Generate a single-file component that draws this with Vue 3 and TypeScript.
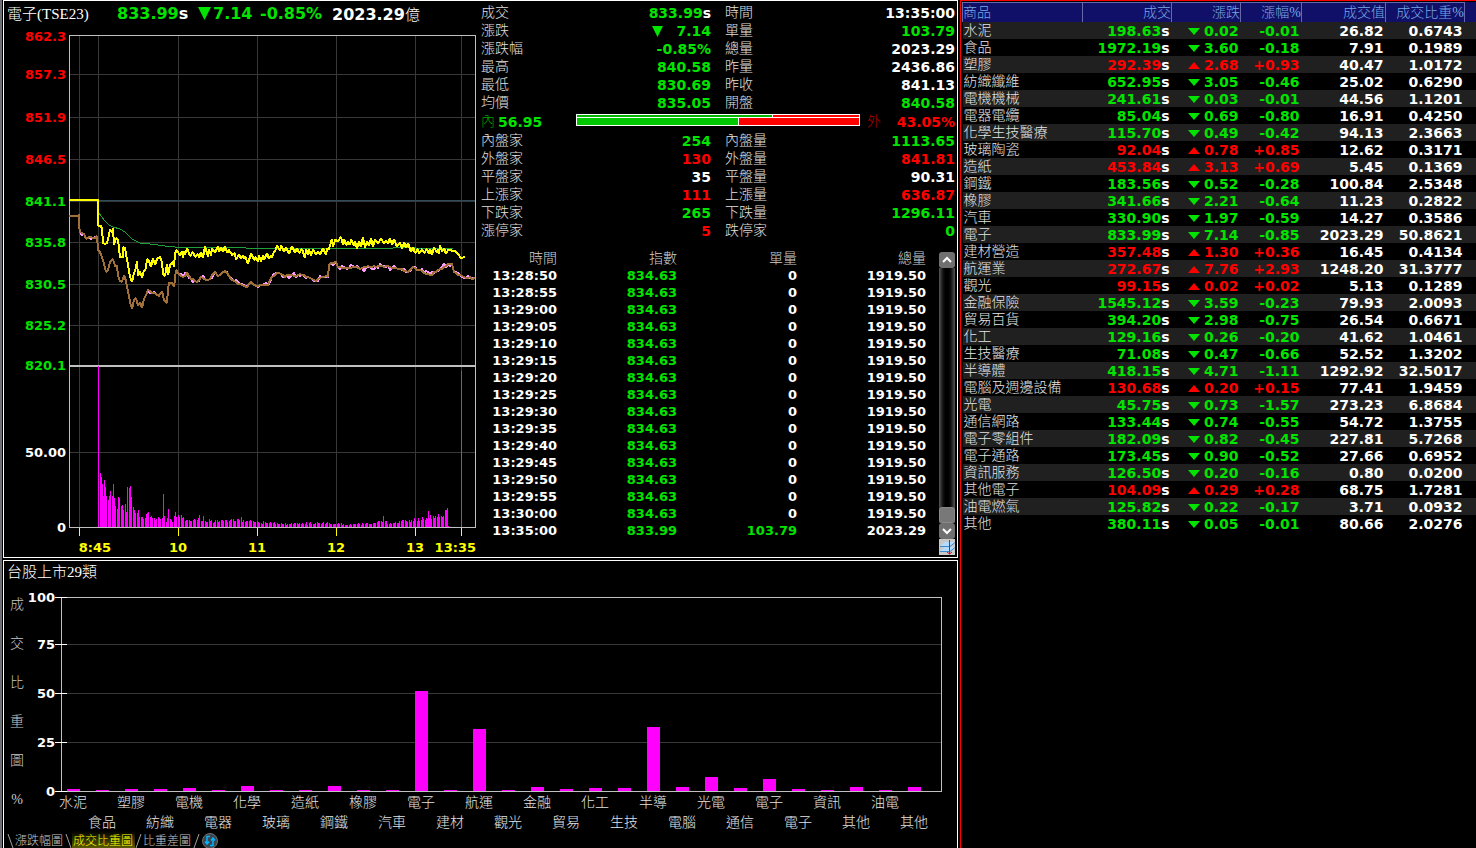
<script setup lang="ts">
import { ref } from 'vue'

type Tone = 'up' | 'down' | 'flat'

interface Quote {
  label: string
  value: string
  tone: Tone
  suffix?: string
  arrow?: boolean
}

interface Sector {
  name: string
  short: string
  price: string
  change: string
  percent: string
  amount: string
  weight: string
}

const quotesTop: Quote[] = [
  { label: '成交', value: '833.99', tone: 'down', suffix: 's' },
  { label: '時間', value: '13:35:00', tone: 'flat' },
  { label: '漲跌', value: '7.14', tone: 'down', arrow: true },
  { label: '單量', value: '103.79', tone: 'down' },
  { label: '漲跌幅', value: '-0.85%', tone: 'down' },
  { label: '總量', value: '2023.29', tone: 'flat' },
  { label: '最高', value: '840.58', tone: 'down' },
  { label: '昨量', value: '2436.86', tone: 'flat' },
  { label: '最低', value: '830.69', tone: 'down' },
  { label: '昨收', value: '841.13', tone: 'flat' },
  { label: '均價', value: '835.05', tone: 'down' },
  { label: '開盤', value: '840.58', tone: 'down' },
]

const quotesBottom: Quote[] = [
  { label: '內盤家', value: '254', tone: 'down' },
  { label: '內盤量', value: '1113.65', tone: 'down' },
  { label: '外盤家', value: '130', tone: 'up' },
  { label: '外盤量', value: '841.81', tone: 'up' },
  { label: '平盤家', value: '35', tone: 'flat' },
  { label: '平盤量', value: '90.31', tone: 'flat' },
  { label: '上漲家', value: '111', tone: 'up' },
  { label: '上漲量', value: '636.87', tone: 'up' },
  { label: '下跌家', value: '265', tone: 'down' },
  { label: '下跌量', value: '1296.11', tone: 'down' },
  { label: '漲停家', value: '5', tone: 'up' },
  { label: '跌停家', value: '0', tone: 'down' },
]

const tickTimes = [
  '13:28:50', '13:28:55', '13:29:00', '13:29:05', '13:29:10', '13:29:15', '13:29:20', '13:29:25',
  '13:29:30', '13:29:35', '13:29:40', '13:29:45', '13:29:50', '13:29:55', '13:30:00',
]
const ticks = [
  ...tickTimes.map((time) => ({ time, index: '834.63', single: '0', total: '1919.50' })),
  { time: '13:35:00', index: '833.99', single: '103.79', total: '2023.29' },
]

const sectorRows = `水泥|水泥|198.63|0.02|-0.01|26.82|0.6743
食品|食品|1972.19|3.60|-0.18|7.91|0.1989
塑膠|塑膠|292.39|2.68|+0.93|40.47|1.0172
紡織纖維|紡織|652.95|3.05|-0.46|25.02|0.6290
電機機械|電機|241.61|0.03|-0.01|44.56|1.1201
電器電纜|電器|85.04|0.69|-0.80|16.91|0.4250
化學生技醫療|化學|115.70|0.49|-0.42|94.13|2.3663
玻璃陶瓷|玻璃|92.04|0.78|+0.85|12.62|0.3171
造紙|造紙|453.84|3.13|+0.69|5.45|0.1369
鋼鐵|鋼鐵|183.56|0.52|-0.28|100.84|2.5348
橡膠|橡膠|341.66|2.21|-0.64|11.23|0.2822
汽車|汽車|330.90|1.97|-0.59|14.27|0.3586
電子|電子|833.99|7.14|-0.85|2023.29|50.8621
建材營造|建材|357.48|1.30|+0.36|16.45|0.4134
航運業|航運|272.67|7.76|+2.93|1248.20|31.3777
觀光|觀光|99.15|0.02|+0.02|5.13|0.1289
金融保險|金融|1545.12|3.59|-0.23|79.93|2.0093
貿易百貨|貿易|394.20|2.98|-0.75|26.54|0.6671
化工|化工|129.16|0.26|-0.20|41.62|1.0461
生技醫療|生技|71.08|0.47|-0.66|52.52|1.3202
半導體|半導|418.15|4.71|-1.11|1292.92|32.5017
電腦及週邊設備|電腦|130.68|0.20|+0.15|77.41|1.9459
光電|光電|45.75|0.73|-1.57|273.23|6.8684
通信網路|通信|133.44|0.74|-0.55|54.72|1.3755
電子零組件|電子|182.09|0.82|-0.45|227.81|5.7268
電子通路|電子|173.45|0.90|-0.52|27.66|0.6952
資訊服務|資訊|126.50|0.20|-0.16|0.80|0.0200
其他電子|其他|104.09|0.29|+0.28|68.75|1.7281
油電燃氣|油電|125.82|0.22|-0.17|3.71|0.0932
其他|其他|380.11|0.05|-0.01|80.66|2.0276`

const sectors: Sector[] = sectorRows.split('\n').map((line) => {
  const [name, short, price, change, percent, amount, weight] = line.split('|')
  return { name, short, price, change, percent, amount, weight }
})

const isUp = (s: Sector) => s.percent.startsWith('+')

/* Intraday chart geometry, in plot units */
const priceLevels = [
  { y: 36, text: '862.3', tone: 'up' },
  { y: 74, text: '857.3', tone: 'up' },
  { y: 117, text: '851.9', tone: 'up' },
  { y: 159, text: '846.5', tone: 'up' },
  { y: 201, text: '841.1', tone: 'down' },
  { y: 242, text: '835.8', tone: 'down' },
  { y: 284, text: '830.5', tone: 'down' },
  { y: 325, text: '825.2', tone: 'down' },
  { y: 365, text: '820.1', tone: 'down' },
  { y: 452, text: '50.00', tone: 'flat' },
  { y: 527, text: '0', tone: 'flat' },
]
const gridRows = [74, 117, 159, 201, 242, 284, 325, 452]
const gridCols = [79, 98, 178, 257, 336, 415, 461]
const timeMarks = [
  { x: 79, labelX: 95, text: '8:45', anchor: 'middle' },
  { x: 178, labelX: 178, text: '10', anchor: 'middle' },
  { x: 257, labelX: 257, text: '11', anchor: 'middle' },
  { x: 336, labelX: 336, text: '12', anchor: 'middle' },
  { x: 415, labelX: 415, text: '13', anchor: 'middle' },
  { x: 461, labelX: 476, text: '13:35', anchor: 'end' },
] as const

function makeRandom(seed: number) {
  let state = seed
  return () => {
    state = (state * 1103515245 + 12345) % 2147483648
    return state / 2147483648
  }
}

type Point = [number, number]
const toPoints = (list: Point[]) => list.map((p) => p.join(',')).join(' ')

function interpolate(list: Point[], x: number) {
  for (let i = 1; i < list.length; i++) {
    const [x0, y0] = list[i - 1]
    const [x1, y1] = list[i]
    if (x <= x1) return x1 === x0 ? y1 : y0 + ((y1 - y0) * (x - x0)) / (x1 - x0)
  }
  return list[list.length - 1][1]
}

const openingRun: Point[] = [
  [69, 200], [98, 200], [98, 226], [101, 226], [102, 229], [103, 243], [105, 244], [107, 243], [109, 235],
  [110, 229], [112, 233], [113, 228], [114, 245], [116, 238], [118, 240], [120, 257], [123, 257], [123, 247],
  [125, 248], [128, 265], [130, 277], [132, 282], [134, 273], [136, 268], [137, 261], [138, 276], [140, 271],
  [142, 278], [143, 273], [146, 268], [147, 259], [149, 261], [151, 267], [153, 258], [155, 265], [157, 259],
  [160, 257], [162, 262], [163, 274], [165, 276], [167, 264], [168, 275], [170, 265], [173, 262], [174, 267],
  [175, 253], [177, 250],
]
const bandTop: Point[] = [
  [178, 250], [186, 247], [197, 253], [203, 247], [218, 246], [226, 244], [232, 249], [245, 254], [265, 254],
  [272, 252], [277, 245], [285, 245], [297, 247], [316, 249], [328, 248], [329, 240], [338, 236], [346, 238],
  [370, 238], [383, 236], [394, 239], [404, 241], [412, 245], [428, 250], [438, 245], [448, 249], [450, 250],
]
const bandBottom: Point[] = [
  [178, 260], [186, 256], [197, 259], [203, 257], [218, 254], [226, 254], [232, 259], [245, 263], [265, 263],
  [272, 260], [277, 249], [285, 253], [297, 256], [316, 259], [328, 254], [329, 248], [338, 244], [346, 248],
  [370, 248], [383, 245], [394, 247], [404, 249], [412, 253], [428, 256], [438, 256], [448, 253], [450, 252],
]

function buildIndexLine() {
  const random = makeRandom(77)
  const list = [...openingRun]
  let low = false
  for (let x = 178; x <= 449; x += random() > 0.5 ? 2 : random() > 0.5 ? 1 : 3) {
    const top = interpolate(bandTop, x)
    const bottom = interpolate(bandBottom, x)
    const span = bottom - top
    const offset = low ? 1.1 - random() * 0.5 : random() * 0.5 - 0.1
    list.push([x, Math.round(top + span * offset)])
    low = !low
  }
  list.push([455, 251], [458, 254], [461, 258], [465, 257])
  return toPoints(list)
}

const futuresBase: Point[] = [
  [69, 216], [78, 216], [79, 214], [79, 226], [80, 232], [84, 234], [86, 239], [89, 237], [93, 238], [97, 236],
  [98, 250], [100, 252], [103, 260], [106, 272], [108, 270], [110, 262], [113, 259], [115, 266], [117, 266],
  [118, 276], [120, 281], [122, 282], [124, 275], [126, 281], [128, 291], [130, 302], [132, 309], [134, 300],
  [136, 298], [138, 306], [140, 302], [142, 308], [144, 299], [146, 295], [148, 290], [152, 293], [156, 294],
  [159, 296], [162, 291], [164, 300], [167, 303], [168, 290], [169, 283], [172, 283], [174, 287], [176, 270],
  [179, 274], [183, 277], [187, 273], [191, 279], [197, 282], [201, 277], [206, 280], [210, 279], [215, 272],
  [218, 276], [225, 271], [229, 276], [234, 281], [240, 284], [247, 287], [251, 282], [256, 286], [262, 285],
  [268, 285], [272, 277], [277, 273], [281, 274], [285, 277], [292, 275], [302, 275], [310, 278], [316, 281],
  [322, 277], [328, 277], [329, 265], [336, 262], [338, 267], [345, 268], [355, 267], [360, 269], [370, 267],
  [382, 266], [392, 268], [400, 269], [408, 272], [413, 267], [420, 270], [430, 275], [440, 269], [448, 264],
  [452, 264], [454, 272], [460, 275], [466, 278], [475, 278],
]

function buildFuturesLine(seed: number, jitter: number, shift: number) {
  const random = makeRandom(seed)
  const list: Point[] = []
  for (let i = 0; i < futuresBase.length; i++) {
    const [x, y] = futuresBase[i]
    list.push([x, y + (x > 80 ? shift : 0)])
    const next = futuresBase[i + 1]
    if (!next || x < 80) continue
    for (let inner = x + 2; inner < next[0] - 1; inner += 2) {
      const base = interpolate([[x, y], next], inner)
      list.push([inner, Math.round(base + (random() - 0.5) * jitter) + shift])
    }
  }
  return toPoints(list)
}

const indexLine = buildIndexLine()
const futuresLine = buildFuturesLine(11, 2, 0)
const futuresShadow = buildFuturesLine(29, 5, 0)
const averageLine =
  '98,212 101,216 105,221 109,225 113,227 120,229 125,232 132,239 140,243 150,244 165,246 175,247 245,247 246,248 393,248 394,247 415,247 416,248 453,248'

const openingVolume = [
  162, 0, 55, 51, 44, 32, 48, 41, 32, 0, 28, 32, 37, 0, 32, 44, 30, 22, 0, 19, 31, 30, 0, 22, 23, 18, 0, 24, 16,
  41, 0, 40, 42, 31, 0, 21, 18, 15, 0, 15, 18, 11, 0, 11, 11, 9, 0, 10, 14, 15, 16, 0, 11, 12, 10, 0, 10, 8, 9,
  0, 11, 10, 9, 0, 10, 34, 12, 0, 6, 10, 19, 0, 9, 8, 6, 0, 12, 16, 11, 0,
]
const volumeTrend: Point[] = [
  [178, 13], [186, 8], [197, 9], [210, 7], [220, 7], [240, 8], [255, 6], [270, 5], [290, 4], [320, 5], [335, 5],
  [345, 3], [360, 4], [380, 6], [390, 5], [405, 7], [420, 9], [432, 11], [440, 13], [447, 17],
]
const volumePeaks: Record<number, number> = { 199: 13, 203: 12, 241: 11, 383: 12, 428: 17, 447: 20, 448: 2, 461: 157 }

function buildVolume() {
  const random = makeRandom(5)
  const bars = openingVolume.map((height, i) => ({ x: 98 + i, height }))
  for (let x = 178; x <= 446; x++) {
    const base = interpolate(volumeTrend, x)
    const height = x % 4 === 0 ? 0 : Math.max(2, Math.round(base * (0.75 + random() * 0.5)))
    bars.push({ x, height: volumePeaks[x] ?? height })
  }
  for (const x of [447, 448, 461]) bars.push({ x, height: volumePeaks[x] })
  return bars.filter((bar) => bar.height > 0)
}
const volumeBars = buildVolume()

/* Weight chart */
const weightScale = [
  { y: 597, text: '100' },
  { y: 644, text: '75' },
  { y: 693, text: '50' },
  { y: 742, text: '25' },
  { y: 791, text: '0' },
]
const sideTitle = ['成', '交', '比', '重', '圖', '%']
const weightBars = sectors.map((s, i) => {
  const height = Math.floor(Number(s.weight) * 1.96) + 1
  return { x: 67 + i * 29, y: 791 - height, height, label: s.short, labelY: i % 2 ? 827 : 807 }
})

const tabs = ['漲跌幅圖', '成交比重圖', '比重差圖']
const activeTab = ref(1)
</script>

<template>
  <main class="desk">
    <div class="left">
      <section class="panel intraday">
        <div class="trend">
          <header class="headline">
            <h1 class="title">電子(TSE23)</h1>
            <span class="last down">833.99<span class="flat">s</span></span>
            <svg class="big-arrow" viewBox="0 0 13 13" aria-hidden="true"><path d="M0 0H13L6.500 13Z" /></svg>
            <span class="move down">7.14</span>
            <span class="move-pct down">-0.85%</span>
            <span class="flat">2023.29<span class="unit">億</span></span>
          </header>
          <svg class="chart" viewBox="4 26 472 531" role="img" aria-label="電子走勢圖">
            <g shape-rendering="crispEdges">
              <rect v-for="y in gridRows" :key="'r' + y" class="grid" x="70" :y="y" width="405" height="1" />
              <rect v-for="x in gridCols" :key="'c' + x" class="grid" :x="x" y="36" width="1" height="491" />
              <rect class="reference" x="70" y="200" width="405" height="1" />
              <rect class="frame" x="69" y="35" width="407" height="1" />
              <rect class="frame" x="69" y="35" width="1" height="493" />
              <rect class="frame" x="475" y="35" width="1" height="493" />
              <rect class="frame" x="69" y="365" width="407" height="2" />
              <rect v-for="bar in volumeBars" :key="bar.x" class="magenta" :x="bar.x" :y="528 - bar.height" width="1" :height="bar.height" />
              <rect class="frame" x="69" y="527" width="407" height="1" />
              <rect v-for="m in timeMarks" :key="m.x" class="mark" :x="m.x" y="528" width="1" height="8" />
              <polyline class="line thin green" :points="averageLine" />
              <polyline class="line pink" :points="futuresShadow" />
              <polyline class="line brown" :points="futuresLine" />
              <polyline class="line yellow" :points="indexLine" />
            </g>
            <text v-for="l in priceLevels" :key="l.text" class="axis" :class="l.tone" x="66" :y="l.y + 5" text-anchor="end">{{ l.text }}</text>
            <text v-for="m in timeMarks" :key="m.text" class="axis time" :x="m.labelX" y="552" :text-anchor="m.anchor">{{ m.text }}</text>
          </svg>
        </div>

        <div class="detail">
          <dl class="quotes">
            <div v-for="q in quotesTop" :key="q.label" class="quote">
              <dt>{{ q.label }}</dt>
              <dd :class="q.tone">
                <svg v-if="q.arrow" class="mid-arrow" viewBox="0 0 11 11" aria-hidden="true"><path d="M0 0H11L5.500 11Z" /></svg>
                <span>{{ q.value }}</span><span v-if="q.suffix" class="flat">{{ q.suffix }}</span>
              </dd>
            </div>
          </dl>
          <div class="ratio">
            <span class="side-label inner">內</span>
            <span class="num down">56.95</span>
            <div class="ratio-bar">
              <div class="ratio-row thin-row"><i class="in-a"></i><i class="out-a"></i></div>
              <div class="ratio-row"><i class="in-b"></i><i class="out-b"></i></div>
            </div>
            <span class="side-label outer">外</span>
            <span class="num pct up">43.05%</span>
          </div>
          <dl class="quotes">
            <div v-for="q in quotesBottom" :key="q.label" class="quote">
              <dt>{{ q.label }}</dt>
              <dd :class="q.tone"><span>{{ q.value }}</span></dd>
            </div>
          </dl>

          <div class="tick-area">
            <table class="ticks">
              <colgroup>
                <col class="t-time" /><col class="t-mid" /><col class="t-mid" /><col />
              </colgroup>
              <thead>
                <tr><th>時間</th><th>指數</th><th>單量</th><th>總量</th></tr>
              </thead>
              <tbody>
                <tr v-for="t in ticks" :key="t.time">
                  <td class="flat">{{ t.time }}</td>
                  <td class="down">{{ t.index }}</td>
                  <td :class="t.single === '0' ? 'flat' : 'down'">{{ t.single }}</td>
                  <td class="flat">{{ t.total }}</td>
                </tr>
              </tbody>
            </table>
            <div class="scroller">
              <button class="step" type="button" aria-label="向上捲動">
                <svg viewBox="0 0 16 16"><path d="M4 10L8 6L12 10" /></svg>
              </button>
              <div class="track"><div class="thumb"></div></div>
              <button class="step" type="button" aria-label="向下捲動">
                <svg viewBox="0 0 16 16"><path d="M4 6L8 10L12 6" /></svg>
              </button>
              <button class="follow" type="button" aria-label="跳至最新">
                <svg viewBox="0 0 16 16">
                  <path class="sheet" d="M6 3H16L11 7H1Z" />
                  <path class="sheet" d="M6 8H16L11 12H1Z" />
                  <path class="edge" d="M1 7.500H11L16 3.500M1 12.500H11L16 8.500" />
                  <path class="needle" d="M10.500 1V15M8 13L10.500 15L13 13" />
                </svg>
              </button>
            </div>
          </div>
        </div>
      </section>

      <section class="panel weights">
        <h2 class="title weights-title">台股上市29類</h2>
        <svg class="chart" viewBox="4 583 953 248" role="img" aria-label="成交比重圖">
          <g shape-rendering="crispEdges">
            <rect v-for="y in [644, 693, 742]" :key="y" class="grid" x="62" :y="y" width="879" height="1" />
            <rect v-for="(b, i) in weightBars" :key="i" class="magenta" :x="b.x" :y="b.y" width="13" :height="b.height" />
            <rect class="frame" x="61" y="597" width="881" height="1" />
            <rect class="frame" x="61" y="791" width="881" height="1" />
            <rect class="frame" x="61" y="597" width="1" height="195" />
            <rect class="frame" x="941" y="597" width="1" height="195" />
            <rect v-for="s in weightScale" :key="s.y" class="notch" x="55" :y="s.y" width="12" height="1" />
          </g>
          <text v-for="s in weightScale" :key="s.text" class="axis flat" x="55" :y="s.y + 5" text-anchor="end">{{ s.text }}</text>
          <text v-for="(c, i) in sideTitle" :key="c" class="cjk dim" x="17" :y="609 + i * 39" text-anchor="middle">{{ c }}</text>
          <text v-for="(b, i) in weightBars" :key="i" class="cjk" :x="b.x + 6" :y="b.labelY" text-anchor="middle">{{ b.label }}</text>
        </svg>
        <nav class="tabs">
          <template v-for="(tab, i) in tabs" :key="tab">
            <svg class="slant" viewBox="0 0 7 15" aria-hidden="true">
              <path :d="i === 2 ? 'M6 1L1 15' : 'M1 1L6 15'" />
            </svg>
            <button type="button" class="tab" :class="{ active: i === activeTab }" @click="activeTab = i">{{ tab }}</button>
          </template>
          <svg class="slant" viewBox="0 0 7 15" aria-hidden="true"><path d="M6 1L1 15" /></svg>
          <button type="button" class="refresh" aria-label="切換">
            <svg viewBox="0 0 16 16">
              <circle cx="8" cy="8" r="7.500" />
              <path d="M8 3.500H5V10.500M3 8.500L5 11L7 8.500M8 12.500H11V5.500M9 7.500L11 5L13 7.500" />
            </svg>
          </button>
        </nav>
      </section>
    </div>

    <section class="market">
      <table class="sectors">
        <colgroup>
          <col class="c-name" /><col class="c-price" /><col class="c-change" /><col class="c-pct" /><col class="c-amount" /><col class="c-weight" /><col />
        </colgroup>
        <thead>
          <tr>
            <th class="name">商品</th><th>成交</th><th>漲跌</th><th>漲幅%</th><th>成交值</th><th>成交比重%</th><th class="rest"></th>
          </tr>
        </thead>
        <tbody>
          <tr v-for="s in sectors" :key="s.name" :class="isUp(s) ? 'up' : 'down'">
            <td class="name">{{ s.name }}</td>
            <td>{{ s.price }}<span class="flat">s</span></td>
            <td>
              <span class="change">
                <svg class="arrow" viewBox="0 0 12 7" aria-hidden="true">
                  <path :d="isUp(s) ? 'M0 7L6 0L12 7Z' : 'M0 0H12L6 7Z'" />
                </svg>
                <span>{{ s.change }}</span>
              </span>
            </td>
            <td>{{ s.percent }}</td>
            <td class="flat">{{ s.amount }}</td>
            <td class="flat">{{ s.weight }}</td>
            <td></td>
          </tr>
        </tbody>
      </table>
    </section>
  </main>
</template>

<style>
body {
  background: #000;
}
</style>

<style scoped>
.desk {
  --num: 'DejaVu Sans', sans-serif;
  --cjk: 'Liberation Serif', 'Noto Sans CJK TC', serif;
  display: grid;
  grid-template-columns: 958fr 516fr;
  column-gap: 2px;
  min-height: 100vh;
  background: #000;
  color: #fff;
  font-family: var(--num);
  font-size: 14px;
  font-weight: 700;
}
h1, h2, dl, dd { margin: 0; }
button { padding: 0; border: 0; font: inherit; cursor: pointer; }
svg { display: block; }
.up { color: #f00; fill: #f00; }
.down { color: #00e400; fill: #00e400; }
.flat { color: #fff; fill: #fff; }

.left {
  display: flex;
  flex-direction: column;
  gap: 2px;
  padding-left: 1px;
  border-left: 2px solid #707078;
}
.panel { border: 1px solid #fff; }
.intraday {
  display: grid;
  grid-template-columns: 472fr 481fr;
}
.chart { width: 100%; height: auto; }
.title {
  font-family: var(--cjk);
  font-size: 15px;
  font-weight: 300;
  line-height: 22px;
  white-space: nowrap;
}
.headline {
  display: flex;
  align-items: center;
  height: 25px;
  padding-left: 3px;
  font-size: 16px;
  white-space: nowrap;
}
.headline .title { width: 110px; }
.last { width: 81px; }
.big-arrow { width: 13px; height: 13px; margin-right: 2px; fill: #00e400; }
.move { width: 47px; }
.move-pct { width: 72px; }
.unit { font-family: var(--cjk); font-size: 15px; font-weight: 300; }

.grid { fill: #383838; }
.frame { fill: #c0c0c0; }
.notch { fill: #fff; }
.reference { fill: #2c4c5c; }
.magenta { fill: #f0f; }
.mark { fill: #ff0; }
.line { fill: none; stroke-width: 2px; stroke-linejoin: bevel; }
.thin { stroke-width: 1px; }
.green { stroke: #20a038; }
.pink { stroke: #f9f; }
.brown { stroke: #a07038; }
.yellow { stroke: #ff0; }
.axis { font-family: var(--num); font-size: 13px; font-weight: 700; }
.time { fill: #ff0; }
.cjk { fill: #e4e4e4; font-family: var(--cjk); font-size: 14px; font-weight: 300; }
.dim { fill: #c8c8c8; }

.detail { padding: 3px 2px 0 5px; }
.quotes {
  display: grid;
  grid-template-columns: 230fr 230fr;
  column-gap: 14px;
}
.quote {
  display: flex;
  justify-content: space-between;
  height: 18px;
  line-height: 18px;
}
dt, .side-label {
  color: #e0e0e0;
  font-family: var(--cjk);
  font-weight: 300;
  line-height: 18px;
}
dd { display: flex; align-items: center; }
.mid-arrow { width: 11px; height: 11px; margin-right: 13px; fill: #00e400; }
.ratio {
  display: flex;
  align-items: center;
  height: 20px;
}
.side-label.inner { width: 17px; color: #00a000; }
.side-label.outer { width: 20px; margin-left: 7px; color: #b00000; }
.num { width: 78px; }
.num.pct { width: 68px; text-align: right; }
.ratio-bar {
  flex: 1;
  border: 1px solid #fff;
  margin-bottom: 4px;
}
.ratio-row { display: flex; height: 7px; }
.thin-row { height: 2px; border-bottom: 1px solid #fff; }
.ratio-row i { border-right: 1px solid #fff; }
.ratio-row i + i { border: 0; flex: 1; background: #f00; }
.in-a { width: 69%; background: #00b400; }
.in-b { width: 57%; background: #00c800; }

.tick-area {
  display: flex;
  align-items: flex-start;
  justify-content: space-between;
  margin-top: 10px;
}
.ticks, .sectors {
  table-layout: fixed;
  border-collapse: collapse;
}
.ticks { width: 445px; font-size: 13px; }
.t-time { width: 76px; }
.t-mid { width: 120px; }
.ticks th, .ticks td {
  height: 17px;
  padding: 0;
  line-height: 17px;
  text-align: right;
}
.ticks th {
  color: #d0d0d0;
  font-family: var(--cjk);
  font-size: 14px;
  font-weight: 300;
}
.scroller {
  display: flex;
  flex-direction: column;
  width: 16px;
  margin-top: 2px;
}
.step {
  height: 16px;
  border-radius: 3px;
  background: #707070;
}
.step svg { width: 16px; height: 16px; fill: none; stroke: #fff; stroke-width: 2px; }
.track {
  display: flex;
  flex-direction: column;
  justify-content: flex-end;
  min-height: 255px;
  background: linear-gradient(90deg, #555, #111 25%, #000 40%, #000 60%, #111 75%, #555);
}
.thumb { height: 16px; border-radius: 3px; border: 1px solid #888; box-sizing: border-box; background: #787878; }
.follow { height: 16px; background: #c8c8c8; }
.follow svg { width: 16px; height: 16px; }
.sheet { fill: #b4dcff; }
.edge { fill: none; stroke: #4088c8; }
.needle { fill: none; stroke: #d01020; }

.weights {
  display: flex;
  flex: 1;
  flex-direction: column;
  border-bottom: 0;
}
.weights-title { padding-left: 3px; }
.tabs { display: flex; height: 17px; padding-left: 3px; }
.slant { width: 7px; height: 15px; fill: none; stroke: #a0a0a0; margin-top: 2px; }
.tab {
  padding: 4px 2px 0 1px;
  background: none;
  color: #c8c8c8;
  font-family: var(--cjk);
  font-size: 12px;
  font-weight: 300;
  line-height: 13px;
  white-space: nowrap;
}
.tab.active { background: linear-gradient(#000, #5a5a00); color: #ff0; }
.refresh { width: 16px; height: 16px; margin-left: 2px; background: none; }
.refresh svg { width: 16px; height: 16px; margin-top: 2px; }
.refresh circle { fill: #3c444c; stroke: #707070; }
.refresh path { fill: none; stroke: #00b4ff; stroke-width: 1.5px; }

.market {
  border-top: 1px solid #f00;
  border-left: 1px solid #f00;
  padding: 1px 0 0 1px;
}
.sectors { width: 100%; }
.c-name { width: 120px; }
.c-price { width: 89px; }
.c-change { width: 69px; }
.c-pct { width: 61px; }
.c-amount { width: 84px; }
.c-weight { width: 79px; }
.sectors th {
  height: 19px;
  padding: 0;
  border-top: 1px solid #6868a8;
  border-left: 1px solid #6868a8;
  background: #101068;
  color: #78a8e4;
  font-family: var(--cjk);
  font-weight: 300;
  line-height: 19px;
  text-align: right;
  white-space: nowrap;
}
.sectors td {
  height: 15px;
  padding: 2px 2px 0 0;
  line-height: 15px;
  text-align: right;
}
.sectors th.name, .sectors td.name { text-align: left; }
.sectors th.rest { border-top-color: #101068; }
.sectors td.name {
  height: 17px;
  padding: 0 0 0 1px;
  color: #e4e4e4;
  font-family: var(--cjk);
  font-weight: 300;
  line-height: 17px;
}
.sectors tbody tr:nth-child(odd) { background: #202020; }
.change {
  display: flex;
  align-items: center;
  justify-content: flex-end;
  gap: 4px;
}
.arrow { width: 12px; height: 7px; }
</style>
